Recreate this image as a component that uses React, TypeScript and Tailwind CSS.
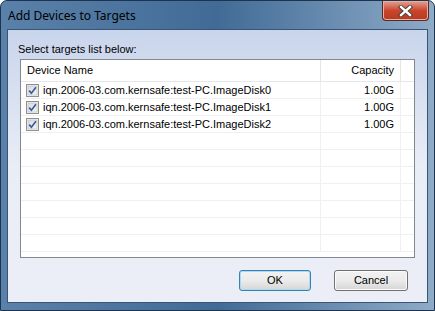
import React from "react";

const DEVICES = [
  { name: "iqn.2006-03.com.kernsafe:test-PC.ImageDisk0", capacity: "1.00G" },
  { name: "iqn.2006-03.com.kernsafe:test-PC.ImageDisk1", capacity: "1.00G" },
  { name: "iqn.2006-03.com.kernsafe:test-PC.ImageDisk2", capacity: "1.00G" },
];

const EMPTY_ROWS = 7;

function CheckBox() {
  return (
    <svg width="13" height="13" viewBox="0 0 13 13" className="shrink-0">
      <defs>
        <linearGradient id="cbFill" x1="0" y1="0" x2="1" y2="1">
          <stop offset="0" stopColor="#d8d9dc" />
          <stop offset="1" stopColor="#f6f6f6" />
        </linearGradient>
      </defs>
      <rect x="0.5" y="0.5" width="12" height="12" fill="#f4f4f4" stroke="#8f8f8f" />
      <rect x="2" y="2" width="9" height="9" fill="url(#cbFill)" stroke="#b5b8be" strokeWidth="0.6" />
      <path d="M3.2 6.6 L5.4 9.2 L9.9 3.2" fill="none" stroke="#3a5b9e" strokeWidth="1.7" />
    </svg>
  );
}

function CloseGlyph() {
  return (
    <svg width="15" height="12" viewBox="0 0 15 12">
      <path
        d="M3 2 L12 10 M12 2 L3 10"
        stroke="#3b3b3b"
        strokeWidth="4.2"
        strokeLinecap="square"
      />
      <path d="M3 2 L12 10 M12 2 L3 10" stroke="#ffffff" strokeWidth="2.4" strokeLinecap="square" />
    </svg>
  );
}

function Row({ children, capacity }: { children?: React.ReactNode; capacity?: string }) {
  return (
    <div className="flex h-[17px] border-b border-[#f0f0f0]">
      <div className="flex w-[300px] items-center gap-[4px] border-r border-[#f0f0f0] pl-[5px]">{children}</div>
      <div className="flex w-[80px] items-center justify-end border-r border-[#f0f0f0] pr-[6px]">{capacity}</div>
      <div className="flex-1" />
    </div>
  );
}

function Button({ label, focused }: { label: string; focused?: boolean }) {
  return (
    <button
      className={
        "flex h-[21px] items-center justify-center rounded-[3px] border bg-gradient-to-b from-[#f2f2f2] via-[#ebebeb] to-[#d6d6d6] text-[11px] text-black " +
        (focused ? "w-[72px] border-[#3c7fb1] shadow-[inset_0_0_0_1px_#a6dcf5]" : "w-[74px] border-[#707070] shadow-[inset_0_0_0_1px_#fbfbfb]")
      }
    >
      {label}
    </button>
  );
}

export default function App() {
  return (
    <div
      className="flex h-[311px] w-[435px] flex-col overflow-hidden rounded-t-[7px] border border-[#1d3451] bg-gradient-to-r from-[#5a81a9] via-[#416b96] to-[#8eabc7]"
      style={{ fontFamily: '"Liberation Sans", Arial, sans-serif' }}
    >
      {/* Title bar */}
      <div className="flex h-[28px] items-start justify-between">
        <span className="pl-[7px] pt-[6px] text-[12px] text-black" style={{ fontFamily: '"Noto Sans", "Open Sans", sans-serif' }}>
          Add Devices to Targets
        </span>
        <div className="mr-[5px] flex h-[20px] w-[47px] items-center justify-center rounded-b-[4px] border border-t-0 border-[#5a2a22] bg-gradient-to-b from-[#e2a092] via-[#c9452b] to-[#b73a22] shadow-[inset_0_0_0_1px_#e6b0a4]">
          <CloseGlyph />
        </div>
      </div>

      {/* Client area */}
      <div className="mx-[6px] mb-[7px] flex flex-1 flex-col border border-[#3a5474] bg-gradient-to-b from-[#c9d5ec] via-[#e9edf6] to-[#ebeef7]">
        <div className="px-[10px] pt-[12px] text-[11px] leading-[14px] text-black">
          Select targets list below:
        </div>

        <div className="ml-[12px] mr-[12px] mt-[3px] flex h-[199px] flex-col overflow-hidden border border-[#828790] bg-white text-[11px] text-black">
          {/* Header */}
          <div className="flex h-[22px] border-b border-[#e4e7ec]">
            <div className="flex w-[300px] items-center border-r border-[#e5e5e5] pl-[6px]">Device Name</div>
            <div className="flex w-[80px] items-center justify-end border-r border-[#e5e5e5] pr-[6px]">Capacity</div>
            <div className="flex-1" />
          </div>
          {DEVICES.map((d) => (
            <Row key={d.name} capacity={d.capacity}>
              <CheckBox />
              <span className="whitespace-nowrap">{d.name}</span>
            </Row>
          ))}
          {Array.from({ length: EMPTY_ROWS }).map((_, i) => (
            <Row key={i} />
          ))}
        </div>

        <div className="mr-[19px] mt-[12px] flex justify-end gap-[23px]">
          <Button label="OK" focused />
          <Button label="Cancel" />
        </div>
      </div>
    </div>
  );
}
